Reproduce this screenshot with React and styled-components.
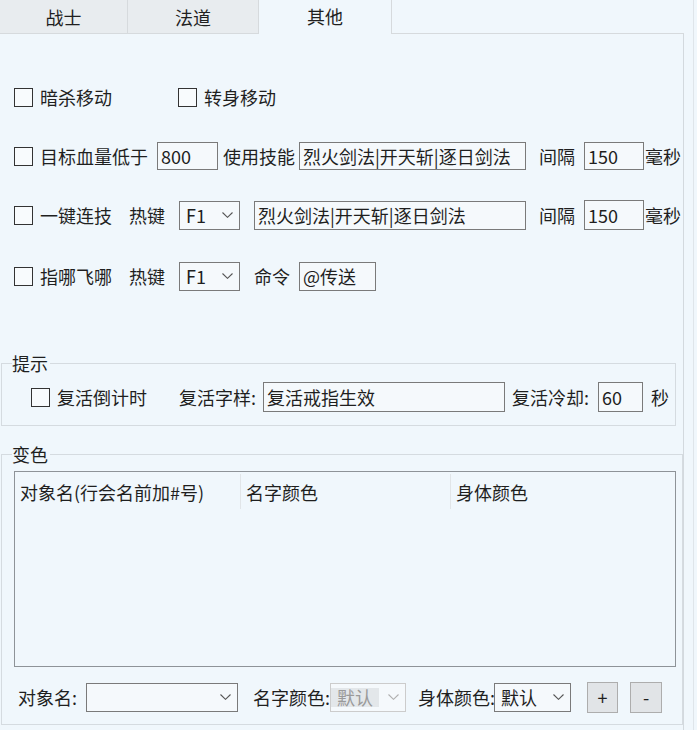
import React from 'react';
import styled, { createGlobalStyle } from 'styled-components';

const BG = '#f0f7fc';

const Global = createGlobalStyle`
  html, body { margin: 0; padding: 0; background: ${BG}; }
  body {
    font-family: "Noto Sans CJK SC", "Noto Sans", "Liberation Sans", sans-serif;
    font-size: 18px;
    color: #1f1f1f;
  }
  * { box-sizing: border-box; }
`;

const Frame = styled.div`
  width: 694px;
  height: 730px;
  border-right: 1px solid #dfe5ea;
  background: ${BG};
  overflow: hidden;
`;

const TabBar = styled.div`
  display: flex;
  width: 684px;
  height: 34px;
`;

const Tab = styled.div`
  width: ${p => p.$w}px;
  height: 34px;
  display: flex;
  align-items: center;
  justify-content: center;
  background: ${p => (p.$active ? BG : '#e8ecef')};
  border-right: 1px solid #d6dadd;
  border-bottom: ${p => (p.$active ? '0' : '1px solid #d6dadd')};
  padding-bottom: ${p => (p.$active ? 3 : 0)}px;
  line-height: 1;
`;

const TabFill = styled.div`
  flex: 1;
  height: 34px;
  border-bottom: 1px solid #d6dadd;
`;

const Panel = styled.div`
  width: 684px;
  height: 696px;
  border-right: 1px solid #d3d9de;
  padding-top: 48px;
`;

const Row = styled.div`
  display: flex;
  align-items: center;
  height: 30px;
  margin-top: ${p => p.$mt || 0}px;
`;

const Check = styled.span`
  display: inline-block;
  flex: none;
  width: 19px;
  height: 19px;
  border: 1px solid #333;
  background: #f8fbfd;
  margin-left: ${p => p.$ml || 0}px;
`;

const Text = styled.span`
  flex: none;
  white-space: nowrap;
  line-height: 1;
  margin-left: ${p => p.$ml || 0}px;
  width: ${p => (p.$w ? `${p.$w}px` : 'auto')};
`;

const Input = styled.div`
  flex: none;
  display: flex;
  align-items: center;
  width: ${p => p.$w}px;
  height: ${p => p.$h || 28}px;
  margin-left: ${p => p.$ml || 0}px;
  border: 1px solid #7a7a7a;
  background: #f5f9fc;
  padding-left: 3px;
  white-space: nowrap;
  overflow: hidden;
  line-height: 1;
`;

const Select = styled.div`
  flex: none;
  display: flex;
  align-items: center;
  justify-content: space-between;
  width: ${p => p.$w}px;
  height: 29px;
  margin-left: ${p => p.$ml || 0}px;
  border: 1px solid ${p => (p.$disabled ? '#cccccc' : '#7a7a7a')};
  background: #f5f9fc;
  padding: 0 6px 0 ${p => (p.$disabled ? 0 : 6)}px;
  color: ${p => (p.$disabled ? '#9a9a9a' : 'inherit')};
  line-height: 1;
`;

const SelectValue = styled.span`
  display: flex;
  align-items: center;
  height: 19px;
  padding: 0 ${p => (p.$disabled ? 6 : 0)}px;
  background: ${p => (p.$disabled ? '#e3e7ea' : 'transparent')};
`;

const Chevron = ({ color = '#555' }) => (
  <svg width="11" height="6" viewBox="0 0 11 6" style={{ flex: 'none' }}>
    <polyline points="0.5,0.5 5.5,5.3 10.5,0.5" fill="none" stroke={color} strokeWidth="1.1" />
  </svg>
);

const Group = styled.fieldset`
  margin: ${p => p.$mt}px 0 0 1px;
  padding: ${p => p.$pt}px 0 ${p => p.$pb}px 0;
  border: 1px solid #d5dbe0;
  width: ${p => p.$w}px;
  min-width: 0;
`;

const Legend = styled.legend`
  margin-left: 10px;
  padding: 0 2px 0 0;
  line-height: 24px;
  font-size: 18px;
`;

const ListView = styled.div`
  width: 662px;
  height: 196px;
  margin: 5px 0 0 12px;
  border: 1px solid #8e9398;
  background: ${BG};
`;

const HeaderRow = styled.div`
  display: flex;
  padding-top: 2px;
`;

const HeaderCell = styled.div`
  display: flex;
  align-items: center;
  width: ${p => (p.$w ? `${p.$w}px` : 'auto')};
  height: 35px;
  padding-left: ${p => p.$pl}px;
  border-right: ${p => (p.$last ? '0' : '1px solid #e1e5e8')};
  line-height: 1;
  white-space: nowrap;
`;

const Button = styled.div`
  flex: none;
  display: flex;
  align-items: center;
  justify-content: center;
  width: ${p => p.$w}px;
  height: 31px;
  margin-left: ${p => p.$ml}px;
  border: 1px solid #adadad;
  background: #e1e4e7;
  line-height: 1;
`;

export default function App() {
  return (
    <>
      <Global />
      <Frame>
        <TabBar>
          <Tab $w={128}>战士</Tab>
          <Tab $w={131}>法道</Tab>
          <Tab $w={133} $active>其他</Tab>
          <TabFill />
        </TabBar>
        <Panel>
          <Row>
            <Check $ml={14} />
            <Text $ml={7}>暗杀移动</Text>
            <Check $ml={66} />
            <Text $ml={7}>转身移动</Text>
          </Row>
          <Row $mt={29}>
            <Check $ml={14} />
            <Text $ml={7}>目标血量低于</Text>
            <Input $w={61} $ml={9}>800</Input>
            <Text $ml={5}>使用技能</Text>
            <Input $w={227} $ml={4}>烈火剑法|开天斩|逐日剑法</Input>
            <Text $ml={13}>间隔</Text>
            <Input $w={60} $ml={9}>150</Input>
            <Text $ml={1}>毫秒</Text>
          </Row>
          <Row $mt={29}>
            <Check $ml={14} />
            <Text $ml={7}>一键连技</Text>
            <Text $ml={17}>热键</Text>
            <Select $w={61} $ml={14}>
              <SelectValue>F1</SelectValue>
              <Chevron />
            </Select>
            <Input $w={272} $h={29} $ml={14}>烈火剑法|开天斩|逐日剑法</Input>
            <Text $ml={13}>间隔</Text>
            <Input $w={60} $h={30} $ml={9}>150</Input>
            <Text $ml={1}>毫秒</Text>
          </Row>
          <Row $mt={31}>
            <Check $ml={14} />
            <Text $ml={7}>指哪飞哪</Text>
            <Text $ml={17}>热键</Text>
            <Select $w={61} $ml={14}>
              <SelectValue>F1</SelectValue>
              <Chevron />
            </Select>
            <Text $ml={14}>命令</Text>
            <Input $w={77} $h={29} $ml={9}>@传送</Input>
          </Row>

          <Group $mt={60} $pt={7} $pb={13} $w={675}>
            <Legend>提示</Legend>
            <Row>
              <Check $ml={29} />
              <Text $ml={7}>复活倒计时</Text>
              <Text $ml={32} $w={84}>复活字样:</Text>
              <Input $w={242} $h={30}>复活戒指生效</Input>
              <Text $ml={7} $w={86}>复活冷却:</Text>
              <Input $w={45} $h={30}>60</Input>
              <Text $ml={8}>秒</Text>
            </Row>
          </Group>

          <Group $mt={16} $pt={0} $pb={12} $w={682}>
            <Legend>变色</Legend>
            <ListView>
              <HeaderRow>
                <HeaderCell $w={226} $pl={5}>对象名(行会名前加#号)</HeaderCell>
                <HeaderCell $w={210} $pl={5}>名字颜色</HeaderCell>
                <HeaderCell $pl={5} $last>身体颜色</HeaderCell>
              </HeaderRow>
            </ListView>
            <Row $mt={15}>
              <Text $ml={16} $w={68}>对象名:</Text>
              <Select $w={152}>
                <span />
                <Chevron />
              </Select>
              <Text $ml={15} $w={77}>名字颜色:</Text>
              <Select $w={76} $disabled>
                <SelectValue $disabled>默认</SelectValue>
                <Chevron color="#b0b0b0" />
              </Select>
              <Text $ml={12} $w={76}>身体颜色:</Text>
              <Select $w={77}>
                <SelectValue>默认</SelectValue>
                <Chevron />
              </Select>
              <Button $w={31} $ml={16}>+</Button>
              <Button $w={32} $ml={12}>-</Button>
            </Row>
          </Group>
        </Panel>
      </Frame>
    </>
  );
}
